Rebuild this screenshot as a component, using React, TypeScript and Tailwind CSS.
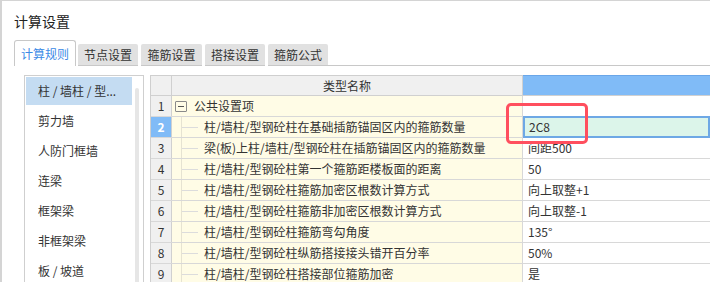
import React from 'react';

const tabs = ['节点设置', '箍筋设置', '搭接设置', '箍筋公式'];
const tabWidths = ['w-[60px] ml-[2px]', 'w-[61px] ml-[3px]', 'w-[60px] ml-[3px]', 'w-[60px] ml-[3px]'];

const listItems = ['柱 / 墙柱 / 型...', '剪力墙', '人防门框墙', '连梁', '框架梁', '非框架梁', '板 / 坡道'];

const rows = [
  { name: '柱/墙柱/型钢砼柱在基础插筋锚固区内的箍筋数量', value: '2C8' },
  { name: '梁(板)上柱/墙柱/型钢砼柱在插筋锚固区内的箍筋数量', value: '间距500' },
  { name: '柱/墙柱/型钢砼柱第一个箍筋距楼板面的距离', value: '50' },
  { name: '柱/墙柱/型钢砼柱箍筋加密区根数计算方式', value: '向上取整+1' },
  { name: '柱/墙柱/型钢砼柱箍筋非加密区根数计算方式', value: '向上取整-1' },
  { name: '柱/墙柱/型钢砼柱箍筋弯勾角度', value: '135°' },
  { name: '柱/墙柱/型钢砼柱纵筋搭接接头错开百分率', value: '50%' },
  { name: '柱/墙柱/型钢砼柱搭接部位箍筋加密', value: '是' },
];

export default function App() {
  return (
    <div className="relative w-[710px] h-[282px] overflow-hidden bg-white border-l-2 border-t border-[#d4d4d4] font-['Noto_Sans_CJK_SC','Noto_Sans',sans-serif] text-[#333]">
      {/* Title */}
      <div className="h-[39px] flex items-center pl-[12px] pt-[1px] text-[14px] text-[#222]">计算设置</div>

      {/* Tabs */}
      <div className="flex items-end h-[26px]">
        <div className="w-[12px]" />
        <div className="w-[62px] h-[26px] bg-white border border-b-0 border-[#c8c8c8] rounded-t-[3px] flex items-center justify-center text-[12px] text-[#3b8ae6]">
          计算规则
        </div>
        {tabs.map((t, i) => (
          <div key={t} className={`${tabWidths[i]} flex flex-col`}>
            <div className="h-[21px] bg-[#e1e1e1] rounded-t-[2px] flex items-center justify-center text-[12px] text-[#333]">{t}</div>
            <div className="h-px bg-[#c8c8c8]" />
          </div>
        ))}
        <div className="flex-1 flex flex-col">
          <div className="h-px bg-[#c8c8c8]" />
        </div>
      </div>

      {/* Pane */}
      <div className="flex pt-[9px] pl-[22px]">
        {/* Left list */}
        <div className="w-[120px] h-[220px] border border-[#cfcfcf] flex">
          <div className="flex-1 flex flex-col">
            {listItems.map((it, i) => (
              <div key={it} className="h-[30px] flex">
                <div className={`flex-1 my-[1px] ml-[1px] mr-[3px] flex items-center pl-[12px] text-[12px] ${i === 0 ? 'bg-[#c4dcf2]' : ''}`}>
                  {it}
                </div>
              </div>
            ))}
          </div>
          <div className="w-[4px] mt-[12px] mr-[4px] bg-[#e6e6e6] rounded-t-full" />
        </div>

        {/* Grid */}
        <div className="ml-[6px] flex-1 border-l border-t border-[#cfcfcf] text-[12px]">
          {/* header */}
          <div className="flex h-[20px] border-b border-[#d0d0d0]">
            <div className="w-[21px] bg-[#f0f0f0] border-r border-[#d0d0d0]" />
            <div className="w-[351px] bg-[#f0f0f0] border-r border-[#d0d0d0] flex items-center justify-center">类型名称</div>
            <div className="flex-1 bg-[#80bbf7] border-t border-[#6aa6e8] -mt-px" />
          </div>

          {/* row 1 */}
          <div className="flex h-[21px] border-b border-[#d8d8d8]">
            <div className="w-[21px] bg-[#f0f0f0] border-r border-[#d0d0d0] flex items-center justify-center">1</div>
            <div className="w-[351px] bg-[#fffce6] border-r border-[#d8d8d8] flex items-center pl-[3px]">
              <div className="w-[12px] h-[11px] border border-[#8a8a8a] rounded-[1px] flex items-center justify-center">
                <div className="w-[6px] h-px bg-[#555]" />
              </div>
              <span className="ml-[7px]">公共设置项</span>
            </div>
            <div className="flex-1 bg-white" />
          </div>

          {rows.map((r, i) => {
            const sel = i === 0;
            return (
              <div key={r.name} className="flex h-[21px] border-b border-[#d8d8d8]">
                <div
                  className={`w-[21px] border-r border-[#d0d0d0] flex items-center justify-center ${
                    sel ? 'bg-[#80bbf7] text-white font-bold' : 'bg-[#f0f0f0]'
                  }`}
                >
                  {i + 2}
                </div>
                <div className="w-[351px] bg-[#fffce6] border-r border-[#d8d8d8] flex items-center">
                  <div className="ml-[9px] self-stretch border-l border-[#e6e3d2] flex items-center">
                    <div className="w-[16px] h-px bg-[#dcdcdc]" />
                  </div>
                  <span className="ml-[6px] whitespace-nowrap">{r.name}</span>
                </div>
                <div
                  className={`flex-1 flex items-center pl-[4px] whitespace-nowrap ${
                    sel ? 'bg-[#dcf5ea] border-2 border-[#6ea8e5] -mt-px h-[22px]' : 'bg-white pl-[5px]'
                  }`}
                >
                  {r.value}
                </div>
              </div>
            );
          })}
        </div>
      </div>

      {/* highlight annotation */}
      <div className="absolute left-[504px] top-[102px] w-[82px] h-[41px] border-[3px] border-[#ff4f5e] rounded-[5px]" />
    </div>
  );
}
